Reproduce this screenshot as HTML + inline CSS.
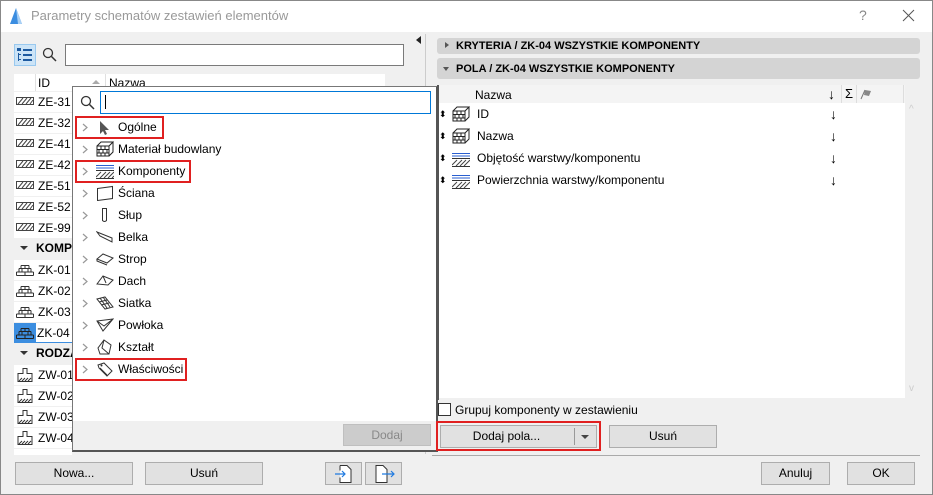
<!DOCTYPE html>
<html><head><meta charset="utf-8"><style>
*{box-sizing:border-box;margin:0;padding:0}
body{width:933px;height:495px;overflow:hidden;background:#f0f0f0;font-family:"Liberation Sans",sans-serif;font-size:12px;color:#000;position:relative}
.a{position:absolute}
.btn{position:absolute;background:#e1e1e1;border:1px solid #adadad;text-align:center;line-height:20px;font-size:12px}
.row{position:absolute;left:14px;width:58px;height:20px;background:#fff;line-height:20px;white-space:nowrap;overflow:hidden}
.row span{position:absolute;left:24px}
.row svg{position:absolute;left:2px;top:5px}
.it{position:absolute;left:80px;height:20px;line-height:20px}
.it .ch{position:absolute;left:2px;top:6px}
.it svg.i{position:absolute;left:16px;top:2px}
.it span{position:absolute;left:38px;white-space:nowrap}
.red{position:absolute;border:2px solid #e02020}
.fr{position:absolute;left:437px;height:20px;line-height:20px;width:470px}
.fr span.t{position:absolute;left:40px}
.fr .ar{position:absolute;left:393px;font-size:14px}
</style></head><body>
<div class="a" style="left:0;top:0;width:933px;height:495px;border:1px solid #888"></div>
<div class="a" style="left:1px;top:1px;width:931px;height:31px;background:#fff"></div>
<svg class="a" style="left:8px;top:7px" width="16" height="18"><path d="M2 17 L8 1 L14 17 Z" fill="#3b8de0"/><path d="M8 1 L14 17 L10 17Z" fill="#a8d0f5"/></svg>
<div class="a" style="left:31px;top:8px;color:#999;font-size:13px">Parametry schematów zestawień elementów</div>
<div class="a" style="left:859px;top:7px;color:#888;font-size:14px">?</div>
<svg class="a" style="left:902px;top:9px" width="13" height="13"><path d="M1 1L12 12M12 1L1 12" stroke="#555" stroke-width="1"/></svg>

<div class="a" style="left:416px;top:36px;border-top:4px solid transparent;border-bottom:4px solid transparent;border-right:5px solid #222"></div>
<div class="a" style="left:425px;top:34px;width:1px;height:420px;background:#ccc"></div>

<div class="a" style="left:14px;top:44px;width:22px;height:22px;background:#cce4f7;border:1px solid #99c9ef"></div>
<svg class="a" style="left:17px;top:48px" width="16" height="14"><g fill="#1d5aa0"><rect x="0" y="0" width="4" height="3"/><rect x="6" y="1" width="9" height="2"/><rect x="6" y="6" width="9" height="2"/><rect x="6" y="11" width="9" height="2"/><rect x="1" y="5" width="1" height="8"/><rect x="2" y="6" width="2" height="1"/><rect x="2" y="11" width="2" height="1"/></g></svg>
<svg class="a" style="left:42px;top:47px" width="15" height="15"><circle cx="6" cy="6" r="4.5" stroke="#333" fill="none" stroke-width="1.3"/><path d="M9.5 9.5L14 14" stroke="#333" stroke-width="1.5"/></svg>
<div class="a" style="left:65px;top:44px;width:339px;height:22px;background:#fff;border:1px solid #7a7a7a"></div>
<div class="a" style="left:14px;top:74px;width:371px;height:17px;background:#fff"></div>
<div class="a" style="left:35px;top:74px;width:1px;height:17px;background:#e0e0e0"></div>
<div class="a" style="left:38px;top:76px">ID</div>
<div class="a" style="left:92px;top:80px;width:0;height:0;border-left:4px solid transparent;border-right:4px solid transparent;border-bottom:4px solid #aaa"></div>
<div class="a" style="left:105px;top:74px;width:1px;height:17px;background:#e0e0e0"></div>
<div class="a" style="left:109px;top:76px">Nazwa</div>

<div class="row" style="top:92px"><svg width="18" height="8"><rect x=".5" y=".5" width="17" height="7" fill="#fff" stroke="#444"/><path d="M2 7L7 1M6 7L11 1M10 7L15 1M14 7L17 3" stroke="#444"/></svg><span>ZE-31</span></div>
<div class="row" style="top:113px"><svg width="18" height="8"><rect x=".5" y=".5" width="17" height="7" fill="#fff" stroke="#444"/><path d="M2 7L7 1M6 7L11 1M10 7L15 1M14 7L17 3" stroke="#444"/></svg><span>ZE-32</span></div>
<div class="row" style="top:134px"><svg width="18" height="8"><rect x=".5" y=".5" width="17" height="7" fill="#fff" stroke="#444"/><path d="M2 7L7 1M6 7L11 1M10 7L15 1M14 7L17 3" stroke="#444"/></svg><span>ZE-41</span></div>
<div class="row" style="top:155px"><svg width="18" height="8"><rect x=".5" y=".5" width="17" height="7" fill="#fff" stroke="#444"/><path d="M2 7L7 1M6 7L11 1M10 7L15 1M14 7L17 3" stroke="#444"/></svg><span>ZE-42</span></div>
<div class="row" style="top:176px"><svg width="18" height="8"><rect x=".5" y=".5" width="17" height="7" fill="#fff" stroke="#444"/><path d="M2 7L7 1M6 7L11 1M10 7L15 1M14 7L17 3" stroke="#444"/></svg><span>ZE-51</span></div>
<div class="row" style="top:197px"><svg width="18" height="8"><rect x=".5" y=".5" width="17" height="7" fill="#fff" stroke="#444"/><path d="M2 7L7 1M6 7L11 1M10 7L15 1M14 7L17 3" stroke="#444"/></svg><span>ZE-52</span></div>
<div class="row" style="top:218px"><svg width="18" height="8"><rect x=".5" y=".5" width="17" height="7" fill="#fff" stroke="#444"/><path d="M2 7L7 1M6 7L11 1M10 7L15 1M14 7L17 3" stroke="#444"/></svg><span>ZE-99</span></div>
<div class="a" style="left:20px;top:246px;border-left:4px solid transparent;border-right:4px solid transparent;border-top:4px solid #333"></div>
<div class="a" style="left:36px;top:241px;font-weight:bold">KOMPO</div>
<div class="row" style="top:260px"><svg width="18" height="11"><path d="M.5 10.5h17M.5 7h17M3 3.5h12M5 .5h8M.5 7v3.5M17.5 7v3.5M3 3.5V7M15 3.5V7M9 7v3.5M6 3.5V7M12 3.5V7M5 .5v3M13 .5v3M9 .5v3" stroke="#333" fill="none"/></svg><span>ZK-01</span></div>
<div class="row" style="top:281px"><svg width="18" height="11"><path d="M.5 10.5h17M.5 7h17M3 3.5h12M5 .5h8M.5 7v3.5M17.5 7v3.5M3 3.5V7M15 3.5V7M9 7v3.5M6 3.5V7M12 3.5V7M5 .5v3M13 .5v3M9 .5v3" stroke="#333" fill="none"/></svg><span>ZK-02</span></div>
<div class="row" style="top:302px"><svg width="18" height="11"><path d="M.5 10.5h17M.5 7h17M3 3.5h12M5 .5h8M.5 7v3.5M17.5 7v3.5M3 3.5V7M15 3.5V7M9 7v3.5M6 3.5V7M12 3.5V7M5 .5v3M13 .5v3M9 .5v3" stroke="#333" fill="none"/></svg><span>ZK-03</span></div>
<div class="row" style="top:323px;border-bottom:1px solid #3c8ee0"><div class="a" style="left:0;top:0;width:22px;height:20px;background:#3c8ee0"></div><svg width="18" height="11"><path d="M.5 10.5h17M.5 7h17M3 3.5h12M5 .5h8M.5 7v3.5M17.5 7v3.5M3 3.5V7M15 3.5V7M9 7v3.5M6 3.5V7M12 3.5V7M5 .5v3M13 .5v3M9 .5v3" stroke="#222" fill="none"/></svg><span style="left:23px">ZK-04</span></div>
<div class="a" style="left:20px;top:351px;border-left:4px solid transparent;border-right:4px solid transparent;border-top:4px solid #333"></div>
<div class="a" style="left:36px;top:346px;font-weight:bold">RODZA</div>
<div class="row" style="top:365px"><svg width="18" height="14" style="top:3px"><path d="M7 .5h4v5h5v8H2v-8h5z" stroke="#333" fill="#fff"/><path d="M3 13l3-3M6 13l3-3M9 13l3-3M12 13l3-3" stroke="#333"/></svg><span>ZW-01</span></div>
<div class="row" style="top:386px"><svg width="18" height="14" style="top:3px"><path d="M7 .5h4v5h5v8H2v-8h5z" stroke="#333" fill="#fff"/><path d="M3 13l3-3M6 13l3-3M9 13l3-3M12 13l3-3" stroke="#333"/></svg><span>ZW-02</span></div>
<div class="row" style="top:407px"><svg width="18" height="14" style="top:3px"><path d="M7 .5h4v5h5v8H2v-8h5z" stroke="#333" fill="#fff"/><path d="M3 13l3-3M6 13l3-3M9 13l3-3M12 13l3-3" stroke="#333"/></svg><span>ZW-03</span></div>
<div class="row" style="top:428px"><svg width="18" height="14" style="top:3px"><path d="M7 .5h4v5h5v8H2v-8h5z" stroke="#333" fill="#fff"/><path d="M3 13l3-3M6 13l3-3M9 13l3-3M12 13l3-3" stroke="#333"/></svg><span>ZW-04</span></div>
<div class="a" style="left:14px;top:449px;width:58px;height:6px;background:#fff"></div>

<!-- popup -->
<div class="a" style="left:72px;top:86px;width:366px;height:366px;background:#fff;border:1px solid #777;border-right:2px solid #555;border-bottom:2px solid #555"></div>
<svg class="a" style="left:80px;top:95px" width="15" height="15"><circle cx="6" cy="6" r="4.5" stroke="#333" fill="none" stroke-width="1.3"/><path d="M9.5 9.5L14 14" stroke="#333" stroke-width="1.5"/></svg>
<div class="a" style="left:100px;top:91px;width:331px;height:23px;border:1px solid #0078d7;background:#fff"></div>
<div class="a" style="left:105px;top:95px;width:1px;height:14px;background:#000"></div>
<div class="it" style="top:117px"><svg class="ch" width="6" height="9"><path d="M1 1l4 3.5L1 8" stroke="#999" fill="none" stroke-width="1.2"/></svg><svg class="i" width="16" height="18"><path d="M4 2v13l3-3 2 4 2-1-2-4h4z" fill="#555"/></svg><span>Ogólne</span></div>
<div class="it" style="top:139px"><svg class="ch" width="6" height="9"><path d="M1 1l4 3.5L1 8" stroke="#999" fill="none" stroke-width="1.2"/></svg><svg class="i" width="18" height="16"><path d="M1 5h12v10H1zM1 5l4-4h12l-4 4M13 15l4-4V1" stroke="#222" fill="none"/><path d="M1 8.5h12M1 12h12M5 5v3.5M9 5v3.5M3 8.5V12M7 8.5V12M11 8.5V12M5 12v3M9 12v3" stroke="#222"/></svg><span>Materiał budowlany</span></div>
<div class="it" style="top:161px"><svg class="ch" width="6" height="9"><path d="M1 1l4 3.5L1 8" stroke="#999" fill="none" stroke-width="1.2"/></svg><svg class="i" width="18" height="16"><path d="M0 2.5h18M0 5h18" stroke="#2a5fd0"/><path d="M0 7.5h18M0 15.5h18" stroke="#333"/><path d="M0 14l5-5M4 15l6-6M8 15l6-6M12 15l6-6M16 15l2-2" stroke="#444"/></svg><span>Komponenty</span></div>
<div class="it" style="top:183px"><svg class="ch" width="6" height="9"><path d="M1 1l4 3.5L1 8" stroke="#999" fill="none" stroke-width="1.2"/></svg><svg class="i" width="18" height="16"><path d="M1.5 3.5l15-2v12l-15 2z" stroke="#333" fill="none"/></svg><span>Ściana</span></div>
<div class="it" style="top:205px"><svg class="ch" width="6" height="9"><path d="M1 1l4 3.5L1 8" stroke="#999" fill="none" stroke-width="1.2"/></svg><svg class="i" width="18" height="16"><path d="M6.5 1.5h4v12q-2 2-4 0z" stroke="#333" fill="none"/></svg><span>Słup</span></div>
<div class="it" style="top:227px"><svg class="ch" width="6" height="9"><path d="M1 1l4 3.5L1 8" stroke="#999" fill="none" stroke-width="1.2"/></svg><svg class="i" width="18" height="16"><path d="M1 3l15 6v4L4 7z M1 3l3 4" stroke="#333" fill="none"/></svg><span>Belka</span></div>
<div class="it" style="top:249px"><svg class="ch" width="6" height="9"><path d="M1 1l4 3.5L1 8" stroke="#999" fill="none" stroke-width="1.2"/></svg><svg class="i" width="18" height="16"><path d="M1 8l6-5 10 4-6 5z M1 8v2l10 4" stroke="#333" fill="none"/></svg><span>Strop</span></div>
<div class="it" style="top:271px"><svg class="ch" width="6" height="9"><path d="M1 1l4 3.5L1 8" stroke="#999" fill="none" stroke-width="1.2"/></svg><svg class="i" width="18" height="16"><path d="M1 11l6-8 10 4-5 5zM7 3l3 7" stroke="#333" fill="none"/></svg><span>Dach</span></div>
<div class="it" style="top:293px"><svg class="ch" width="6" height="9"><path d="M1 1l4 3.5L1 8" stroke="#999" fill="none" stroke-width="1.2"/></svg><svg class="i" width="18" height="16"><path d="M1 4l8-2 8 10-8 2zM4 3l7 10M7 2l7 10M3 7l8-2M5 10l8-2" stroke="#333" fill="none"/></svg><span>Siatka</span></div>
<div class="it" style="top:315px"><svg class="ch" width="6" height="9"><path d="M1 1l4 3.5L1 8" stroke="#999" fill="none" stroke-width="1.2"/></svg><svg class="i" width="18" height="16"><path d="M1 4l16-2-10 12zM1 4l7 5 9-7" stroke="#333" fill="none"/></svg><span>Powłoka</span></div>
<div class="it" style="top:337px"><svg class="ch" width="6" height="9"><path d="M1 1l4 3.5L1 8" stroke="#999" fill="none" stroke-width="1.2"/></svg><svg class="i" width="18" height="16"><path d="M8 1l7 5-2 9H4L2 9zM8 1l-2 8 7 6" stroke="#333" fill="none"/></svg><span>Kształt</span></div>
<div class="it" style="top:359px"><svg class="ch" width="6" height="9"><path d="M1 1l4 3.5L1 8" stroke="#999" fill="none" stroke-width="1.2"/></svg><svg class="i" width="18" height="16"><path d="M2 4l6-2 8 8-5 5-8-8z" stroke="#333" fill="none"/><circle cx="5.5" cy="4.5" r="1" fill="#333"/><path d="M4 7l7 7" stroke="#333"/></svg><span>Właściwości</span></div>
<div class="red" style="left:75px;top:116px;width:89px;height:23px"></div>
<div class="red" style="left:75px;top:160px;width:116px;height:23px"></div>
<div class="red" style="left:75px;top:358px;width:112px;height:23px"></div>
<div class="a" style="left:73px;top:421px;width:363px;height:29px;background:#f0f0f0"></div>
<div class="btn" style="left:343px;top:424px;width:88px;height:22px;background:#ccc;border-color:#bfbfbf;color:#888">Dodaj</div>

<div class="btn" style="left:15px;top:462px;width:118px;height:23px">Nowa...</div>
<div class="btn" style="left:145px;top:462px;width:118px;height:23px">Usuń</div>
<div class="btn" style="left:325px;top:462px;width:37px;height:23px"></div>
<svg class="a" style="left:334px;top:465px" width="20" height="18"><path d="M6 .5h7l4 4v13H6v-5M6 5.5V.5" stroke="#333" fill="#fff"/><path d="M1 9h10M8 6l3 3-3 3" stroke="#1f7ae0" fill="none" stroke-width="1.2"/></svg>
<div class="btn" style="left:365px;top:462px;width:37px;height:23px"></div>
<svg class="a" style="left:374px;top:465px" width="22" height="18"><path d="M2 .5h7l4 4v13H2z" stroke="#333" fill="#fff"/><path d="M8 9h12M17 6l3 3-3 3" stroke="#1f7ae0" fill="none" stroke-width="1.2"/></svg>

<!-- right panel -->
<div class="a" style="left:437px;top:38px;width:483px;height:16px;background:#d4d4d4;border-radius:3px"></div>
<div class="a" style="left:445px;top:42px;border-top:3.5px solid transparent;border-bottom:3.5px solid transparent;border-left:4px solid #555"></div>
<div class="a" style="left:456px;top:40px;font-weight:bold;font-size:11px">KRYTERIA / ZK-04 WSZYSTKIE KOMPONENTY</div>
<div class="a" style="left:437px;top:58px;width:483px;height:21px;background:#d4d4d4;border-radius:3px"></div>
<div class="a" style="left:443px;top:67px;border-left:3.5px solid transparent;border-right:3.5px solid transparent;border-top:4px solid #555"></div>
<div class="a" style="left:456px;top:63px;font-weight:bold;font-size:11px">POLA / ZK-04 WSZYSTKIE KOMPONENTY</div>
<div class="a" style="left:437px;top:85px;width:468px;height:313px;background:#fff"></div>
<div class="a" style="left:437px;top:85px;width:468px;height:18px;background:#f4f4f4"></div>
<div class="a" style="left:437px;top:85px;width:2px;height:315px;background:#555"></div>
<div class="a" style="left:475px;top:88px">Nazwa</div>
<div class="a" style="left:828px;top:86px;font-size:14px">↓</div>
<div class="a" style="left:841px;top:85px;width:1px;height:18px;background:#ddd"></div>
<div class="a" style="left:845px;top:86px;font-size:13px">Σ</div>
<div class="a" style="left:856px;top:85px;width:1px;height:18px;background:#ddd"></div>
<svg class="a" style="left:860px;top:88px" width="14" height="12"><path d="M1 11L5 2" stroke="#777"/><path d="M5 2l6 1-2 5-5-1z" fill="#888"/></svg>
<div class="a" style="left:903px;top:85px;width:1px;height:18px;background:#ddd"></div>
<div class="a" style="left:907px;top:101px;width:13px;height:297px;background:#f0f0f0"></div>
<div class="a" style="left:909px;top:104px;color:#ccc;font-size:10px">^</div>
<div class="a" style="left:909px;top:383px;color:#ccc;font-size:10px">v</div>

<div class="fr" style="top:104px"><span class="a" style="left:2px;font-size:9px">⬍</span><svg class="a" style="left:15px;top:2px" width="18" height="16"><path d="M1 5h12v10H1zM1 5l4-4h12l-4 4M13 15l4-4V1" stroke="#222" fill="none"/><path d="M1 8.5h12M1 12h12M5 5v3.5M9 5v3.5M3 8.5V12M7 8.5V12M11 8.5V12M5 12v3M9 12v3" stroke="#222"/></svg><span class="t">ID</span><span class="ar">↓</span></div>
<div class="fr" style="top:126px"><span class="a" style="left:2px;font-size:9px">⬍</span><svg class="a" style="left:15px;top:2px" width="18" height="16"><path d="M1 5h12v10H1zM1 5l4-4h12l-4 4M13 15l4-4V1" stroke="#222" fill="none"/><path d="M1 8.5h12M1 12h12M5 5v3.5M9 5v3.5M3 8.5V12M7 8.5V12M11 8.5V12M5 12v3M9 12v3" stroke="#222"/></svg><span class="t">Nazwa</span><span class="ar">↓</span></div>
<div class="fr" style="top:148px"><span class="a" style="left:2px;font-size:9px">⬍</span><svg class="a" style="left:15px;top:3px" width="18" height="16"><path d="M0 2.5h18M0 5h18" stroke="#2a5fd0"/><path d="M0 7.5h18M0 15.5h18" stroke="#333"/><path d="M0 14l5-5M4 15l6-6M8 15l6-6M12 15l6-6" stroke="#444"/></svg><span class="t">Objętość warstwy/komponentu</span><span class="ar">↓</span></div>
<div class="fr" style="top:170px"><span class="a" style="left:2px;font-size:9px">⬍</span><svg class="a" style="left:15px;top:3px" width="18" height="16"><path d="M0 2.5h18M0 5h18" stroke="#2a5fd0"/><path d="M0 7.5h18M0 15.5h18" stroke="#333"/><path d="M0 14l5-5M4 15l6-6M8 15l6-6M12 15l6-6" stroke="#444"/></svg><span class="t">Powierzchnia warstwy/komponentu</span><span class="ar">↓</span></div>

<div class="a" style="left:438px;top:403px;width:13px;height:13px;border:1px solid #333;background:#fff"></div>
<div class="a" style="left:455px;top:403px">Grupuj komponenty w zestawieniu</div>
<div class="red" style="left:436px;top:421px;width:165px;height:30px"></div>
<div class="btn" style="left:440px;top:425px;width:157px;height:23px;padding-right:24px">Dodaj pola...</div>
<div class="a" style="left:574px;top:428px;width:1px;height:17px;background:#999"></div>
<div class="a" style="left:581px;top:435px;border-left:4px solid transparent;border-right:4px solid transparent;border-top:4px solid #444"></div>
<div class="btn" style="left:609px;top:425px;width:108px;height:23px">Usuń</div>
<div class="a" style="left:432px;top:455px;width:488px;height:1px;background:#aaa"></div>
<div class="btn" style="left:761px;top:462px;width:69px;height:23px">Anuluj</div>
<div class="btn" style="left:847px;top:462px;width:68px;height:23px">OK</div>
</body></html>
